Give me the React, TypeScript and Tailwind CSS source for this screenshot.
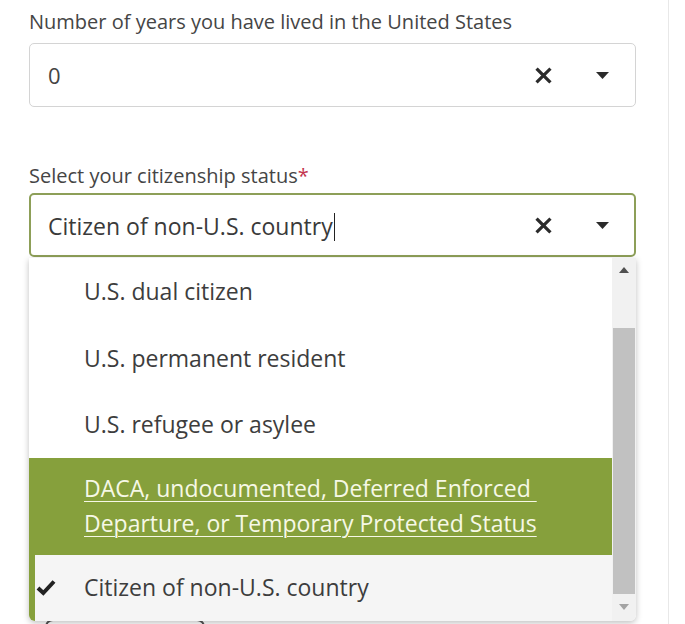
import React from 'react';

const font = { fontFamily: '"Open Sans", "Noto Sans", sans-serif' };

const ClearIcon = () => (
  <svg width="17" height="17" viewBox="0 0 16 16" className="text-[#2b2b2b]">
    <path d="M2.5 2.5 L13.5 13.5 M13.5 2.5 L2.5 13.5" stroke="currentColor" strokeWidth="3" strokeLinecap="square" />
  </svg>
);

const Caret = () => (
  <svg width="13" height="7" viewBox="0 0 13 7" className="text-[#2b2b2b]">
    <path d="M0 0 H13 L6.5 7 Z" fill="currentColor" />
  </svg>
);

const Check = () => (
  <svg width="20" height="17" viewBox="0 0 20 17" className="shrink-0 text-[#222]">
    <path d="M2 9 L7.3 14 L18 2.5" stroke="currentColor" strokeWidth="4" fill="none" />
  </svg>
);

const options = ['U.S. dual citizen', 'U.S. permanent resident', 'U.S. refugee or asylee'];

export default function App() {
  return (
    <div className="h-[624px] overflow-hidden bg-white" style={font}>
      <div className="relative h-full w-[669px] border-r border-[#e8e8e8] pl-[29px] pr-[32px] pt-[8px]">
        <label className="block text-[20px] leading-[28px] text-[#454545]">
          Number of years you have lived in the United States
        </label>
        <div className="mt-[7px] flex h-[64px] items-center rounded-[5px] border border-[#d4d4d4] pl-[18px] pr-[26px]">
          <span className="flex-1 text-[22px] text-[#444]">0</span>
          <ClearIcon />
          <span className="ml-[44px]">
            <Caret />
          </span>
        </div>

        <label className="mt-[55px] block text-[20px] leading-[28px] text-[#454545]">
          Select your citizenship status<span className="text-[#c4354f]">*</span>
        </label>
        <div className="mt-[3px] flex h-[64px] items-center rounded-[5px] border-2 border-[#8d9f58] pl-[17px] pr-[25px]">
          <span className="flex-1 text-[23px] text-[#3a3a3a]">
            Citizen of non-U.S. country<span className="ml-[1px] inline-block h-[28px] w-px translate-y-[6px] bg-[#222]" />
          </span>
          <ClearIcon />
          <span className="ml-[44px]">
            <Caret />
          </span>
        </div>

        <div className="mt-[362px] ml-[16px] h-10 w-[160px] rounded-lg border-2 border-[#555]" />

        <div className="absolute left-[29px] top-[258px] flex h-[363px] w-[607px] overflow-hidden rounded-b-[6px] bg-white shadow-[0_2px_6px_rgba(0,0,0,0.25)]">
          <ul className="flex-1 text-[23px] text-[#3d3d3d]">
            {options.map((o) => (
              <li key={o} className="flex h-[66.5px] items-center pl-[55px]">
                {o}
              </li>
            ))}
            <li className="flex h-[97px] flex-col justify-center bg-[#86a03c] pl-[55px] leading-[35px] text-[#f6f8e6] underline decoration-1 underline-offset-[4px]">
              <span>DACA, undocumented, Deferred Enforced&nbsp;</span>
              <span>Departure, or Temporary Protected Status</span>
            </li>
            <li className="flex h-[66px] items-center border-l-[6px] border-[#86a03c] bg-[#f5f5f5]">
              <span className="ml-[1px] mr-[28px] flex shrink-0">
                <Check />
              </span>
              Citizen of non-U.S. country
            </li>
          </ul>
          <div className="flex w-[24px] flex-col bg-[#f1f1f1] pb-[2px]">
            <div className="flex h-[24px] items-center justify-center">
              <svg width="10" height="6" viewBox="0 0 10 6"><path d="M0 6 H10 L5 0 Z" fill="#505050" /></svg>
            </div>
            <div className="mx-[1px] mt-[46px] h-[266px] bg-[#c1c1c1]" />
            <div className="flex flex-1 items-center justify-center">
              <svg width="10" height="6" viewBox="0 0 10 6"><path d="M0 0 H10 L5 6 Z" fill="#a3a3a3" /></svg>
            </div>
          </div>
        </div>
      </div>
    </div>
  );
}
